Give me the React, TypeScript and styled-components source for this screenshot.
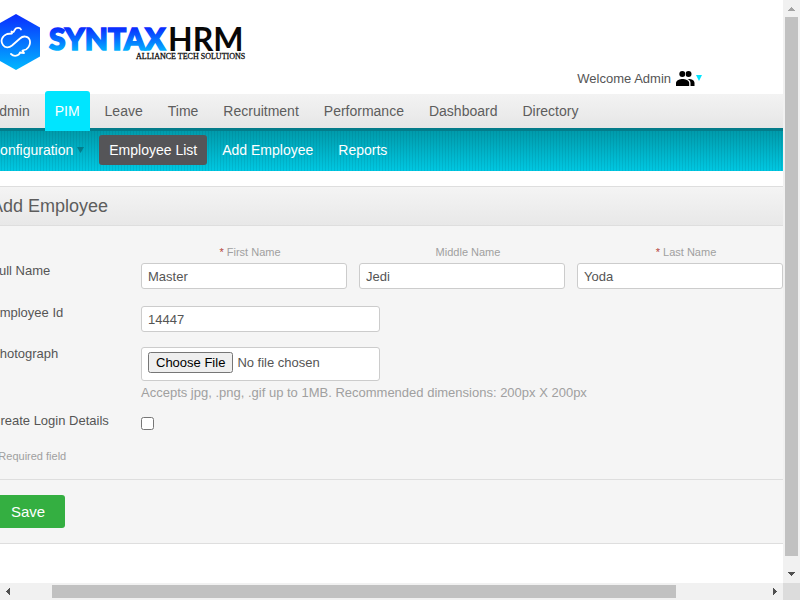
import React from "react";
import styled, { createGlobalStyle } from "styled-components";

const GlobalStyle = createGlobalStyle`
  *, *::before, *::after { box-sizing: border-box; }
  body {
    margin: 0;
    background: #fff;
    color: #555;
    font-family: "Liberation Sans", Arial, sans-serif;
    font-size: 13px;
    line-height: 16px;
  }
`;

const Shell = styled.div`
  display: grid;
  grid-template-columns: minmax(0, 1fr) 17px;
  grid-template-rows: minmax(0, 1fr) 17px;
  height: 100vh;
`;

const Viewport = styled.div`
  overflow: hidden;
`;

/* The page is scrolled sideways, so its left edge starts outside the viewport. */
const Page = styled.div`
  margin: 0 -20px;
`;

const Header = styled.header`
  display: flex;
  justify-content: space-between;
  align-items: flex-end;
  height: 94px;
  padding: 0 100px 0 20px;
`;

const Logo = styled.svg`
  display: block;
  align-self: flex-start;
`;

const Account = styled.button`
  display: flex;
  align-items: center;
  margin-bottom: 7px;
  padding: 0;
  border: 0;
  background: none;
  color: #555;
  font: inherit;
  line-height: 17px;
`;

const PeopleIcon = styled.svg`
  margin: 0 1px 0 5px;
`;

const MainNav = styled.nav`
  display: flex;
  gap: 5px;
  height: 34px;
  background: linear-gradient(#f3f3f3, #e6e6e6);
`;

const MainLink = styled.a<{ $active?: boolean }>`
  position: relative;
  height: ${(p) => (p.$active ? "40px" : "34px")};
  margin-top: ${(p) => (p.$active ? "-3px" : "0")};
  padding: ${(p) => (p.$active ? "12px 10px" : "9px 10px")};
  border-radius: 3px 3px 0 0;
  background: ${(p) => (p.$active ? "#00e5ff" : "none")};
  color: ${(p) => (p.$active ? "#fff" : "#5d5d5d")};
  font-size: 14px;
  text-decoration: none;
`;

const SubNav = styled.nav`
  display: flex;
  align-items: flex-start;
  gap: 5px;
  height: 43px;
  padding-top: 4px;
  border-top: 3px solid #047c8a;
  background:
    repeating-linear-gradient(90deg, rgba(0, 60, 80, 0.1) 0 1px, transparent 1px 3px),
    linear-gradient(#009bab, #00c8e2);
`;

const SubLink = styled.a<{ $active?: boolean }>`
  display: flex;
  align-items: center;
  gap: 4px;
  height: 30px;
  padding: 0 10px;
  border-radius: 3px;
  background: ${(p) => (p.$active ? "#555558" : "none")};
  color: #fff;
  font-size: 14px;
  text-decoration: none;
`;

const Panel = styled.main`
  margin-top: 15px;
  border: 1px solid #dedede;
  background: #f5f5f5;
`;

const PanelTitle = styled.h1`
  margin: 0;
  padding: 9px 10px 8px;
  border-bottom: 1px solid #dedede;
  background: linear-gradient(#f4f4f4, #e8e8e8);
  color: #5d5d5d;
  font-size: 18px;
  font-weight: 400;
  line-height: 21px;
`;

const Form = styled.form`
  padding: 20px 10px 15px;
`;

const Row = styled.div`
  display: grid;
  grid-template-columns: 150px minmax(0, 1fr);
  align-items: start;
  margin-bottom: 14px;
`;

const Label = styled.label<{ $low?: boolean }>`
  padding-top: ${(p) => (p.$low ? "17px" : "0")};
`;

const Names = styled.div`
  display: grid;
  grid-template-columns: repeat(3, minmax(0, 1fr));
  gap: 12px;
  padding: 0 9px 2px 0;
`;

const NameField = styled.label`
  display: flex;
  flex-direction: column;
  gap: 5px;
`;

const Caption = styled.span`
  padding-left: 12px;
  color: #a0a0a0;
  font-size: 11px;
  line-height: 12px;
  text-align: center;
`;

const Star = styled.em`
  color: #b5453c;
  font-style: normal;
`;

const TextInput = styled.input`
  width: 100%;
  height: 26px;
  padding: 0 6px;
  border: 1px solid #ccc;
  border-radius: 3px;
  background: #fff;
  color: #555;
  font: inherit;
`;

const MediumInput = styled(TextInput)`
  display: block;
  max-width: 239px;
  margin-top: 1px;
`;

const FileInput = styled(MediumInput)`
  height: 34px;
  padding: 4px 6px;
`;

const Hint = styled.p`
  margin: 6px 0 0;
  color: #a0a0a0;
  line-height: 12px;
`;

const Check = styled.input`
  width: 13px;
  height: 13px;
  margin: 4px 0 0;
`;

const Required = styled.p`
  margin: 0;
  padding-top: 4px;
  color: #a0a0a0;
  font-size: 11px;
`;

const Actions = styled.div`
  padding: 15px 10px;
  border-top: 1px solid #dedede;
`;

const SaveButton = styled.button`
  display: block;
  height: 33px;
  padding: 0 20px;
  border: 0;
  border-radius: 3px;
  background: #34af41;
  color: #fff;
  font: inherit;
  font-size: 15px;
`;

const ScrollTrack = styled.div<{ $vertical?: boolean }>`
  display: flex;
  flex-direction: ${(p) => (p.$vertical ? "column" : "row")};
  background: #f1f1f1;
`;

const ScrollArrow = styled.svg`
  flex: none;
  display: block;
`;

const Space = styled.div<{ $grow: number }>`
  flex: ${(p) => p.$grow} 1 0;
`;

const Thumb = styled(Space)<{ $vertical?: boolean }>`
  margin: ${(p) => (p.$vertical ? "0 2px" : "2px 0")};
  background: #c1c1c1;
`;

const Corner = styled.div`
  background: #dcdcdc;
`;

function Arrow({ points, fill = "#505050" }: { points: string; fill?: string }) {
  return (
    <ScrollArrow width="17" height="17" shapeRendering="crispEdges">
      <polygon points={points} fill={fill} />
    </ScrollArrow>
  );
}

function Brand() {
  return (
    <Logo width="250" height="76" role="img" aria-label="Syntax HRM, Alliance Tech Solutions">
      <defs>
        <linearGradient id="hex" x1="0" y1="0" x2="0" y2="1">
          <stop offset="0" stopColor="#0a2cff" />
          <stop offset="1" stopColor="#00b8ff" />
        </linearGradient>
        <linearGradient id="word" gradientUnits="userSpaceOnUse" x1="0" y1="28" x2="0" y2="52">
          <stop offset="0" stopColor="#0a2cff" />
          <stop offset="1" stopColor="#00b8ff" />
        </linearGradient>
      </defs>
      <path d="M16 14L40 27.500V56.500L16 70L-8 56.500V27.500Z" fill="url(#hex)" />
      <path
        d="M21 29.500C20 27 16 27.500 15 29.500L13.500 32L11.500 31.500L12 33.500L7 34C2 36 0 41 3 45C5 48 9 48 12 45.500L20 38.500C23 35.500 28 36 29.500 39.500C31 43 29 48 26 49.500L22.500 50.500L24 53L20 52.500C19 56 14 57 11 54"
        fill="none"
        stroke="#fff"
        strokeWidth="1.800"
        strokeLinecap="round"
        strokeLinejoin="round"
      />
      <text
        x="49"
        y="50"
        fontFamily="Lato, sans-serif"
        fontSize="30"
        fontWeight="900"
        fill="url(#word)"
        stroke="url(#word)"
        strokeWidth="1.600"
      >
        SYNTAX
      </text>
      <text x="168" y="51" fontFamily="Lato, sans-serif" fontSize="32" fontWeight="700" fill="#080808">
        HRM
      </text>
      <text
        x="136"
        y="59"
        fontFamily="Liberation Serif, serif"
        fontSize="8"
        fill="#111"
        stroke="#111"
        strokeWidth="0.300"
      >
        ALLIANCE TECH SOLUTIONS
      </text>
    </Logo>
  );
}

const mainItems = ["Admin", "PIM", "Leave", "Time", "Recruitment", "Performance", "Dashboard", "Directory"];
const subItems = ["Configuration", "Employee List", "Add Employee", "Reports"];
const names = [
  { label: "First Name", value: "Master", required: true },
  { label: "Middle Name", value: "Jedi", required: false },
  { label: "Last Name", value: "Yoda", required: true },
];

export default function App() {
  return (
    <>
      <GlobalStyle />
      <Shell>
        <Viewport>
          <Page>
            <Header>
              <Brand />
              <Account type="button">
                Welcome Admin
                <PeopleIcon width="19" height="15">
                  <circle cx="12.500" cy="3" r="3" />
                  <path d="M14.500 15V12C14.500 10.300 13.500 9 11.500 8C15.500 7.800 18.500 9.200 18.500 12V15Z" />
                  <circle cx="6.300" cy="3" r="3.600" fill="#fff" />
                  <circle cx="6.300" cy="3" r="3" />
                  <path d="M0 15V12C0 9.200 4 8 6.500 8S13.200 9.200 13.200 12V15Z" />
                </PeopleIcon>
                <svg width="7" height="7">
                  <path d="M0 0H6L3 6Z" fill="#00e5ff" />
                </svg>
              </Account>
            </Header>
            <MainNav>
              {mainItems.map((item) => (
                <MainLink key={item} href="#" $active={item === "PIM"}>
                  {item}
                </MainLink>
              ))}
            </MainNav>
            <SubNav>
              {subItems.map((item) => (
                <SubLink key={item} href="#" $active={item === "Employee List"}>
                  {item}
                  {item === "Configuration" && (
                    <svg width="7" height="7">
                      <path d="M0 0H7L3.500 6Z" fill="#047c8a" />
                    </svg>
                  )}
                </SubLink>
              ))}
            </SubNav>
            <Panel>
              <PanelTitle>Add Employee</PanelTitle>
              <Form id="employee">
                <Row>
                  <Label as="span" $low>
                    Full Name
                  </Label>
                  <Names>
                    {names.map((n) => (
                      <NameField key={n.label}>
                        <Caption>
                          {n.required && <Star>* </Star>}
                          {n.label}
                        </Caption>
                        <TextInput defaultValue={n.value} />
                      </NameField>
                    ))}
                  </Names>
                </Row>
                <Row>
                  <Label htmlFor="employeeId">Employee Id</Label>
                  <MediumInput id="employeeId" defaultValue="14447" />
                </Row>
                <Row>
                  <Label htmlFor="photo">Photograph</Label>
                  <div>
                    <FileInput id="photo" type="file" />
                    <Hint>Accepts jpg, .png, .gif up to 1MB. Recommended dimensions: 200px X 200px</Hint>
                  </div>
                </Row>
                <Row>
                  <Label htmlFor="login">Create Login Details</Label>
                  <Check id="login" type="checkbox" />
                </Row>
                <Required>
                  <Star>*</Star> Required field
                </Required>
              </Form>
              <Actions>
                <SaveButton type="submit" form="employee">
                  Save
                </SaveButton>
              </Actions>
            </Panel>
          </Page>
        </Viewport>
        <ScrollTrack $vertical aria-hidden="true">
          <Arrow points="5,11 12,11 8.500,7" fill="#a3a3a3" />
          <Thumb $grow={539} $vertical />
          <Space $grow={10} />
          <Arrow points="5,6 12,6 8.500,10" />
        </ScrollTrack>
        <ScrollTrack aria-hidden="true">
          <Arrow points="10,5 10,12 6,8.500" />
          <Space $grow={35} />
          <Thumb $grow={624} />
          <Space $grow={90} />
          <Arrow points="7,5 7,12 11,8.500" />
        </ScrollTrack>
        <Corner />
      </Shell>
    </>
  );
}
